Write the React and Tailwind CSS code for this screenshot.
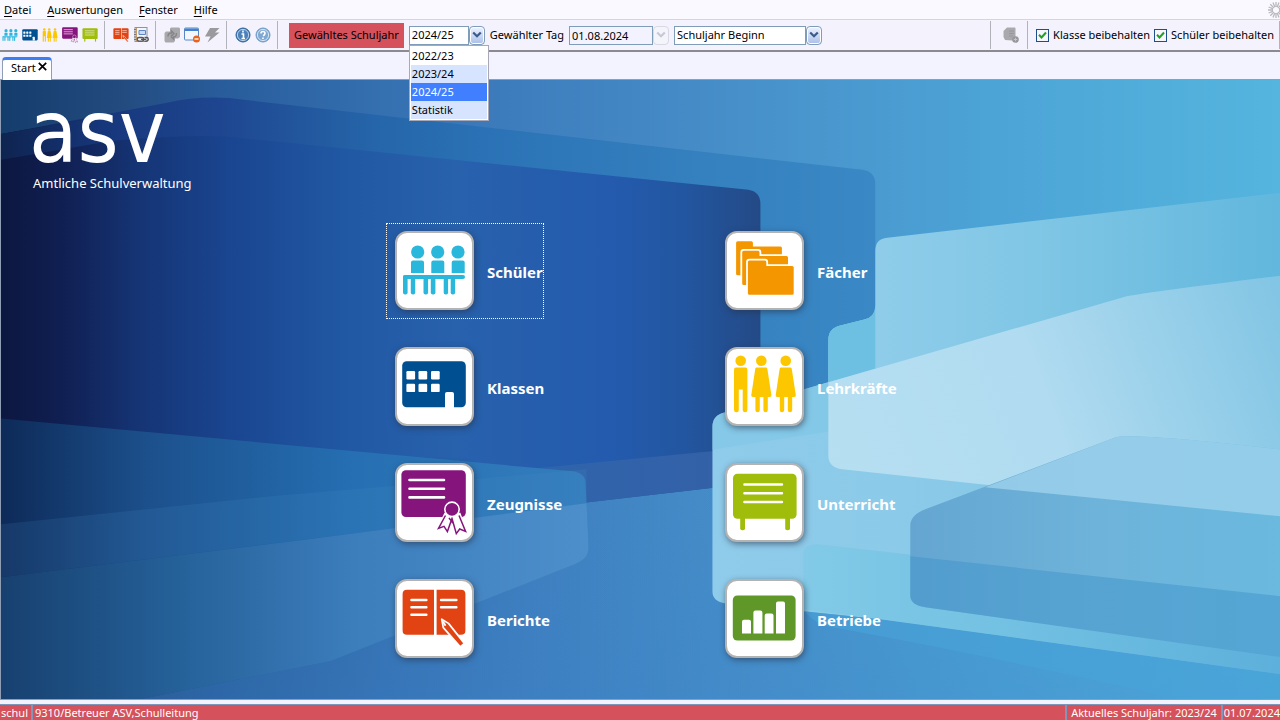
import React from "react";

const pictograms = {
  students: (
    <g fill="#2ab7dc">
      <circle cx="22.7" cy="21" r="6.6" />
      <circle cx="42.7" cy="21" r="6.6" />
      <circle cx="63" cy="21" r="6.6" />
      <path d="M16 42V31.5q0-2 2-2h9q2 0 2 2V42zM36.3 42V31.5q0-2 2-2h9q2 0 2 2V42zM56.7 42V31.5q0-2 2-2h9q2 0 2 2V42z" />
      <rect x="8" y="44" width="62" height="4" rx="2" />
      <rect x="8" y="44" width="4.6" height="19.5" rx="2" />
      <rect x="15.8" y="46" width="4.4" height="17.5" rx="2" />
      <rect x="28.5" y="46" width="4.6" height="17.5" rx="2" />
      <rect x="35.8" y="46" width="4.6" height="17.5" rx="2" />
      <rect x="48.7" y="46" width="4.4" height="17.5" rx="2" />
      <rect x="55.7" y="46" width="4.4" height="17.5" rx="2" />
    </g>
  ),
  classes: (
    <g>
      <rect x="7.2" y="14.3" width="63.6" height="46" rx="4.5" fill="#004f90" />
      <g fill="#fff">
        <rect x="11.4" y="24" width="8.7" height="8.4" rx="1.2" />
        <rect x="23.5" y="24" width="8.7" height="8.4" rx="1.2" />
        <rect x="36" y="24" width="8.7" height="8.4" rx="1.2" />
        <rect x="11.4" y="36.7" width="8.7" height="8.4" rx="1.2" />
        <rect x="23.5" y="36.7" width="8.7" height="8.4" rx="1.2" />
        <rect x="36" y="36.7" width="8.7" height="8.4" rx="1.2" />
        <path d="M50 61V47q0-2 2-2h5q2 0 2 2V61z" />
      </g>
    </g>
  ),
  certificates: (
    <g>
      <rect x="6.4" y="7.3" width="64.4" height="46.7" rx="4.5" fill="#86147d" />
      <path d="M14.5 17H49M14.5 25.7H49M14.5 34.4H49" stroke="#fff" strokeWidth="2.6" strokeLinecap="round" />
      <path
        d="M50.5 51.5 43.5 65.4 49 63.4 52.6 68.6 57.2 57 61.3 70.6 64.7 66 70.6 68.4 64.2 51.5z"
        fill="#fff"
        stroke="#fff"
        strokeWidth="3.4"
      />
      <path
        d="M50.5 52.5 43.5 65.4 49 63.4 52.4 68.6 57 55.5 61.3 70.6 64.7 66 70.6 68.4 64 52.5M54 55l4.4 5.6"
        fill="none"
        stroke="#86147d"
        strokeWidth="1.5"
      />
      <circle cx="57" cy="46.3" r="7.2" fill="#86147d" stroke="#fff" strokeWidth="1.6" />
    </g>
  ),
  reports: (
    <g>
      <path d="M39 10.7H12q-4.4 0-4.4 4.4V51.4q0 4.4 4.4 4.4H39zM41.6 10.7H66q4.4 0 4.4 4.4V51.4q0 4.4-4.4 4.4H41.6z" fill="#e24313" />
      <path d="M16.4 21H31.4M16.4 28.3H31.4M16.4 35.8H31.4M46 21H61.4M46 28.3H61.4" stroke="#fff" strokeWidth="2.4" strokeLinecap="round" />
      <path d="M46.7 40.2l1.6 8.4L65.2 67.8l4.2-3.4L53.5 44.4z" fill="#e24313" stroke="#fff" strokeWidth="1.7" strokeLinejoin="round" />
      <path d="M48 42.5l2.5 4.2" stroke="#fff" strokeWidth="1.8" />
    </g>
  ),
  subjects: (
    <g fill="#f49600" stroke="#fff" strokeWidth="1.8">
      <path d="M10.2 11.8q0-2.4 2.4-2.4H26.4q2.4 0 2.4 2.4v2.8H55.4q2.4 0 2.4 2.4V42.8q0 2.4-2.4 2.4H12.6q-2.4 0-2.4-2.4z" />
      <path d="M16.3 21.2q0-2.4 2.4-2.4H33q2.4 0 2.4 2.4v3H61.5q2.4 0 2.4 2.4V52.6q0 2.4-2.4 2.4H18.7q-2.4 0-2.4-2.4z" />
      <path d="M22 31q0-2.4 2.4-2.4H39.8q2.4 0 2.4 2.4v3.2H67.2q2.4 0 2.4 2.4V62.2q0 2.4-2.4 2.4H24.4q-2.4 0-2.4-2.4z" />
    </g>
  ),
  teachers: (
    <g fill="#fdc700">
      <circle cx="15.7" cy="13.7" r="5.3" />
      <circle cx="36.3" cy="13.7" r="5.3" />
      <circle cx="60.7" cy="13.7" r="5.3" />
      <path d="M9 22.4q0-2 2-2h9.400q2 0 2 2V63q0 2.200-2.300 2.200T17.700 63V42.500H13.800V63q0 2.200-2.400 2.200T9 63z" />
      <path d="M31.800 20.400h9q1.200 0 1.500 1.200L46.400 48q.3 2-1.600 2h-2v13q0 2.200-2.200 2.200T38.400 63V50H34.800V63q0 2.200-2.200 2.200T30.400 63V50h-2.500q-1.900 0-1.600-2L30.300 21.600q.3-1.200 1.500-1.200z" />
      <path d="M56.200 20.400h9q1.200 0 1.500 1.200L70.800 48q.3 2-1.600 2h-2v13q0 2.200-2.200 2.200T62.800 63V50H59.200V63q0 2.200-2.200 2.200T54.800 63V50h-2.500q-1.900 0-1.600-2L54.700 21.600q.3-1.200 1.500-1.200z" />
    </g>
  ),
  lessons: (
    <g>
      <rect x="8" y="10.7" width="63.6" height="45" rx="4.5" fill="#9fbd0a" />
      <rect x="15.2" y="52" width="4.8" height="15.2" rx="2" fill="#9fbd0a" />
      <rect x="60.2" y="52" width="4.8" height="15.2" rx="2" fill="#9fbd0a" />
      <path d="M19.4 21.5H57M19.4 30.2H57M19.4 39H57" stroke="#fff" strokeWidth="2.4" strokeLinecap="round" />
    </g>
  ),
  companies: (
    <g>
      <rect x="7.8" y="16.4" width="62.8" height="45.2" rx="4.5" fill="#5f9829" />
      <path
        d="M17 54.4V42.8q0-2 2-2h5q2 0 2 2V54.4zM28.4 54.4V33.4q0-2 2-2h5q2 0 2 2V54.4zM39.7 54.4V36.4q0-2 2-2h4.8q2 0 2 2V54.4zM51 54.4V24.4q0-2 2-2h5q2 0 2 2V54.4z"
        fill="#fff"
      />
    </g>
  ),
};

const tiles = [
  { id: "students", label: "Schüler", focused: true },
  { id: "subjects", label: "Fächer" },
  { id: "classes", label: "Klassen" },
  { id: "teachers", label: "Lehrkräfte" },
  { id: "certificates", label: "Zeugnisse" },
  { id: "lessons", label: "Unterricht" },
  { id: "reports", label: "Berichte" },
  { id: "companies", label: "Betriebe" },
];

function ToolButton({ label, children, viewBox = "0 0 16 16", disabled }) {
  return (
    <button type="button" aria-label={label} title={label} disabled={disabled} className="size-4 shrink-0">
      <svg viewBox={viewBox} className="size-4" aria-hidden="true">
        {children}
      </svg>
    </button>
  );
}

function Divider() {
  return <div className="h-7 w-px shrink-0 bg-[#b2b2ba]" />;
}

function Chevron({ disabled }) {
  return (
    <span
      className={
        disabled
          ? "pointer-events-none flex h-[19px] w-4 items-center justify-center rounded-sm border border-[#d9d9e4] bg-[#f4f4fb] text-[#c9c9d6]"
          : "pointer-events-none flex h-[19px] w-4 items-center justify-center rounded-sm border border-[#7f9db9] bg-linear-to-b from-[#eef3ff] to-[#a9bfe8] text-[#3c5a8c] inset-ring inset-ring-white"
      }
    >
      <svg viewBox="0 0 10 8" className="h-2 w-2.5" fill="none" stroke="currentColor" strokeWidth="2.2" aria-hidden="true">
        <path d="M1.2 1.5 5 5.3 8.8 1.5" />
      </svg>
    </span>
  );
}

function Combo({ id, value, options, className, label }) {
  return (
    <div className={"flex h-[19px] " + className}>
      <select
        id={id}
        aria-label={label}
        defaultValue={value}
        className="h-[19px] min-w-0 flex-1 appearance-none border border-[#7f9db9] bg-white px-0.5 text-[11px] leading-4 text-black outline-none"
      >
        {options.map((o) => (
          <option key={o}>{o}</option>
        ))}
      </select>
      <Chevron />
    </div>
  );
}

function Check({ label }) {
  return (
    <label className="flex items-center gap-1">
      <span className="grid size-[13px] place-items-center">
        <input type="checkbox" defaultChecked className="col-start-1 row-start-1 size-[13px] appearance-none border border-[#1c4f8c] bg-[#f6f6fb]" />
        <svg viewBox="0 0 9 9" className="pointer-events-none col-start-1 row-start-1 size-[9px]" fill="none" stroke="#21a121" strokeWidth="2" aria-hidden="true">
          <path d="M1 3.8 3.5 6.5 8 1.5" />
        </svg>
      </span>
      {label}
    </label>
  );
}

function Backdrop() {
  return (
    <svg viewBox="0 80 1280 620" preserveAspectRatio="none" className="absolute inset-0 h-full w-full" aria-hidden="true">
      <defs>
        <linearGradient id="sky" gradientUnits="userSpaceOnUse" x1="0" y1="0" x2="1280" y2="0">
          <stop offset="0" stopColor="#143d6c" />
          <stop offset=".09" stopColor="#234a7e" />
          <stop offset=".17" stopColor="#285c9a" />
          <stop offset=".3" stopColor="#3570b1" />
          <stop offset=".42" stopColor="#3f7fbf" />
          <stop offset=".6" stopColor="#4892cb" />
          <stop offset=".78" stopColor="#4ca4d6" />
          <stop offset="1" stopColor="#55b5de" />
        </linearGradient>
        <linearGradient id="floor" gradientUnits="userSpaceOnUse" x1="0" y1="350" x2="0" y2="700">
          <stop offset="0" stopColor="#3a82c8" stopOpacity="0" />
          <stop offset="1" stopColor="#3a82c8" stopOpacity=".3" />
        </linearGradient>
        <linearGradient id="outer" gradientUnits="userSpaceOnUse" x1="0" y1="0" x2="875" y2="0">
          <stop offset="0" stopColor="#0e2450" />
          <stop offset=".12" stopColor="#17377c" />
          <stop offset=".25" stopColor="#1e4690" />
          <stop offset=".42" stopColor="#2564a8" />
          <stop offset=".55" stopColor="#2a72b5" />
          <stop offset=".8" stopColor="#3580bf" />
          <stop offset="1" stopColor="#3a88c5" />
        </linearGradient>
        <linearGradient id="inner" gradientUnits="userSpaceOnUse" x1="0" y1="0" x2="760" y2="0">
          <stop offset="0" stopColor="#0c1740" />
          <stop offset=".08" stopColor="#101f52" />
          <stop offset=".18" stopColor="#153474" />
          <stop offset=".3" stopColor="#1a4590" />
          <stop offset=".45" stopColor="#2158a3" />
          <stop offset=".6" stopColor="#2861ac" />
          <stop offset=".8" stopColor="#245bae" />
          <stop offset=".9" stopColor="#2256a0" />
          <stop offset="1" stopColor="#244a86" />
        </linearGradient>
        <linearGradient id="innerFoot" gradientUnits="userSpaceOnUse" x1="0" y1="0" x2="760" y2="0">
          <stop offset="0" stopColor="#103060" />
          <stop offset=".5" stopColor="#2a68ac" />
          <stop offset="1" stopColor="#3560a8" />
        </linearGradient>
        <linearGradient id="left" gradientUnits="userSpaceOnUse" x1="0" y1="0" x2="588" y2="0">
          <stop offset="0" stopColor="#0d2a58" />
          <stop offset=".25" stopColor="#1c508c" />
          <stop offset=".6" stopColor="#256fb2" />
          <stop offset="1" stopColor="#347dbd" />
        </linearGradient>
        <linearGradient id="leftLow" gradientUnits="userSpaceOnUse" x1="0" y1="0" x2="588" y2="0">
          <stop offset="0" stopColor="#17406f" />
          <stop offset=".3" stopColor="#256199" />
          <stop offset=".6" stopColor="#3c7dbc" />
          <stop offset="1" stopColor="#4d8fcb" />
        </linearGradient>
        <linearGradient id="right" gradientUnits="userSpaceOnUse" x1="875" y1="0" x2="1280" y2="0">
          <stop offset="0" stopColor="#8fcdea" />
          <stop offset=".4" stopColor="#80c6e5" />
          <stop offset="1" stopColor="#61b7dd" />
        </linearGradient>
        <linearGradient id="pale" gradientUnits="userSpaceOnUse" x1="800" y1="470" x2="1280" y2="290">
          <stop offset="0" stopColor="#b7dff2" />
          <stop offset=".5" stopColor="#b0dbf0" />
          <stop offset="1" stopColor="#82c5e4" />
        </linearGradient>
        <linearGradient id="low" gradientUnits="userSpaceOnUse" x1="712" y1="0" x2="1280" y2="0">
          <stop offset="0" stopColor="#8fcbea" />
          <stop offset=".4" stopColor="#8acae8" />
          <stop offset="1" stopColor="#70bce0" />
        </linearGradient>
        <linearGradient id="teal" gradientUnits="userSpaceOnUse" x1="800" y1="0" x2="1280" y2="0">
          <stop offset="0" stopColor="#82cae7" />
          <stop offset=".5" stopColor="#70bfe2" />
          <stop offset="1" stopColor="#5db0db" />
        </linearGradient>
        <linearGradient id="slab" gradientUnits="userSpaceOnUse" x1="910" y1="0" x2="1280" y2="0">
          <stop offset="0" stopColor="#64a6d1" />
          <stop offset=".5" stopColor="#6eb3da" />
          <stop offset="1" stopColor="#6ab9df" />
        </linearGradient>
      </defs>
      <rect y="80" width="1280" height="620" fill="url(#sky)" />
      <rect y="80" width="1280" height="620" fill="url(#floor)" />
      <path d="M0 134 165 103Q205 94 245 100L862 170Q875 172 875 184V413Q875 424 862 428L588 467 0 530z" fill="url(#outer)" />
      <path d="M0 134 110 115V141Q190 134 230 137L748 190Q760 192 760 204V483L588 503 0 580z" fill="url(#inner)" />
      <path d="M0 134 110 115V141L0 160z" fill="url(#outer)" />
      <path d="M0 525 400 482 760 447V483L588 503 0 578z" fill="url(#innerFoot)" />
      <path d="M0 419 572 472Q585 474 585 484L588 548Q588 560 574 565L330 662 140 700H0z" fill="url(#left)" />
      <path d="M0 525 270 497 586 470V505L0 578z" fill="#4b96cb" opacity=".14" />
      <path d="M0 578 300 541 586 504 588 548Q588 560 574 565L330 662 140 700H0z" fill="url(#leftLow)" />
      <path d="M828 340Q828 329 840 326L864 320Q875 317 875 306V251Q875 239 887 238L1280 193V450L828 470z" fill="url(#right)" />
      <path d="M828 340Q828 329 840 326L864 320Q875 317 875 306V430L828 430z" fill="#6ec0e3" />
      <path d="M712 427Q712 416 724 413L803 390 1125 297Q1135 294 1280 276V675L880 620 724 604Q712 602 712 592z" fill="url(#low)" />
      <path d="M803 390 828 383 875 369V425L712 450V427Q712 416 724 413z" fill="#7fc6e6" opacity=".6" />
      <path d="M803 390 1125 297Q1135 294 1280 276V517L842 470Q828 468 828 456V383z" fill="url(#pale)" />
      <path d="M803 555Q803 544 818 545L1280 597V675L880 620 803 610z" fill="url(#teal)" />
      <path d="M910 526Q910 516 925 510L1115 438Q1130 433 1280 450V658L925 608Q910 606 910 596z" fill="url(#slab)" />
      <path d="M985 488 1115 438Q1130 433 1280 450V517z" fill="#a2d4ed" opacity=".75" />
      <path d="M910 557 1280 597V658L925 608Q910 606 910 596z" fill="#3f93ca" opacity=".5" />
      <path d="M803 612 880 620 1280 675V700H1180Q980 655 820 626z" fill="#48a4d8" opacity=".6" />
    </svg>
  );
}

function Tile({ id, label, focused }) {
  return (
    <button
      type="button"
      className={
        "flex h-24 items-center gap-[13px] justify-self-start border border-dotted px-2 pb-px text-left " +
        (focused ? "w-[158px] overflow-hidden border-white" : "border-transparent")
      }
    >
      <span className="size-[79px] shrink-0 rounded-xl border-2 border-[#b3b3b3] bg-white shadow-[1px_2px_6px_rgba(40,50,70,0.6)]">
        <svg viewBox="2 2 75 75" className="size-full" aria-hidden="true">
          {pictograms[id]}
        </svg>
      </span>
      <span className="pt-0.5 text-[15px] font-bold leading-5 text-white">{label}</span>
    </button>
  );
}

export default function App() {
  const years = ["2022/23", "2023/24", "2024/25", "Statistik"];
  const rowStyle = ["bg-white", "bg-[#d6e4ff]", "bg-[#407fff] text-white", "bg-[#d6e4ff]"];
  return (
    <div className="flex min-h-screen flex-col bg-[#f3f3ff] font-['Noto_Sans',sans-serif] text-[11px] leading-4 text-black">
      <nav className="flex h-5 items-center justify-between border-b border-[#d5d5dd] bg-[#f9f9ff] pl-1">
        <div className="flex gap-4">
          {["Datei", "Auswertungen", "Fenster", "Hilfe"].map((m) => (
            <button key={m} type="button" className="leading-4">
              <span className="underline underline-offset-2">{m[0]}</span>
              {m.slice(1)}
            </button>
          ))}
        </div>
        <div className="h-4 w-3 overflow-hidden">
          <svg viewBox="0 0 16 16" className="size-4" stroke="#b9b9bd" strokeWidth="1.3" aria-hidden="true">
            <path d="M8 0v5M8 11v5M0 8h5M11 8h5M2.3 2.3l3.600 3.600M10.100 10.100l3.600 3.600M2.300 13.700l3.600-3.600M10.100 5.900l3.600-3.600M5 .6l1.900 4.600M9.100 10.800l1.900 4.600M.6 5l4.600 1.900M10.800 9.100l4.600 1.900M.6 11l4.600-1.900M10.800 6.900l4.600-1.900M5 15.400l1.900-4.600M9.100 5.200 11 .6" />
          </svg>
        </div>
      </nav>

      <header className="flex h-8 items-center border-b-2 border-[#8c8a90] bg-[#f3f2fd] pl-0.5">
        <div className="flex items-center gap-1">
          <ToolButton label="Schüler" viewBox="6 8 66 62">{pictograms.students}</ToolButton>
          <ToolButton label="Klassen" viewBox="6 5 66 66">{pictograms.classes}</ToolButton>
          <ToolButton label="Lehrkräfte" viewBox="6 6 67 62">{pictograms.teachers}</ToolButton>
          <ToolButton label="Zeugnisse" viewBox="6 6 66 66">{pictograms.certificates}</ToolButton>
          <ToolButton label="Unterricht" viewBox="6 6 67 66">{pictograms.lessons}</ToolButton>
        </div>
        <div className="ml-1.5 flex items-center gap-2">
          <Divider />
          <div className="flex items-center gap-1">
            <ToolButton label="Berichte" viewBox="6 7 66 64">{pictograms.reports}</ToolButton>
            <ToolButton label="Notizbuch">
              <rect x="2" y=".5" width="12" height="14" fill="#f4f6fb" stroke="#8a94a6" />
              <path d="M3.500 1v13" stroke="#c59a6a" />
              <path d="M1 2.500h2M1 5h2M1 7.500h2M1 10h2M1 12.500h2" stroke="#77767a" />
              <path d="M6 3.500h6.500v4H6z" fill="#c9daf2" stroke="#5d87c4" />
              <path d="M6 10.500h3a1.800 1.800 0 0 1 0 3.600H6a1.800 1.800 0 0 1 0-3.600zM11.500 10.500h2a1.800 1.800 0 0 1 0 3.600h-2M8 12.300h5" fill="none" stroke="#555" strokeWidth="1.300" />
            </ToolButton>
          </div>
        </div>
        <div className="ml-1.5 flex items-center gap-2">
          <Divider />
          <div className="flex items-center gap-1">
            <ToolButton label="Aktualisieren" disabled>
              <path d="M6 1.500 7 .5h8l1 1V10l-2 1.500h-3V14l-1.500 1.500H1.500L.5 14V6L2 4.500h4z" fill="#a9a9ad" />
              <path d="M4 9.500q0-3.500 3.500-3.500V4L10 6.500 7.500 9V7.500M12.500 6q0 4-3 4v2L7 9.800" fill="none" stroke="#85858a" strokeWidth="1.400" />
            </ToolButton>
            <ToolButton label="Fenster schließen">
              <rect x=".5" y="1" width="14" height="12" rx="1" fill="#f2f7ff" stroke="#5b86c4" />
              <path d="M1 1.500h13V4H1z" fill="#4580cf" />
              <circle cx="12.500" cy="12" r="3.500" fill="#ea6318" />
              <path d="M10.500 12h4" stroke="#fff" strokeWidth="1.400" />
            </ToolButton>
            <ToolButton label="Ausführen" disabled>
              <path d="M6 1h9.500l-4.500 4.500h4.500L3.500 15.500 6.500 9.500H1z" fill="#9a9a9e" />
            </ToolButton>
          </div>
        </div>
        <div className="ml-1.5 flex items-center gap-2">
          <Divider />
          <div className="flex items-center gap-1">
            <ToolButton label="Information">
              <circle cx="8" cy="8" r="7" fill="#4b80b8" stroke="#2f629c" />
              <circle cx="8" cy="8" r="5.600" fill="none" stroke="#b9d2ea" />
              <path d="M8 3.600v1.900M6.500 7H8.500v4M6.500 11.500h3.500" stroke="#fff" strokeWidth="1.600" fill="none" />
            </ToolButton>
            <ToolButton label="Hilfe">
              <circle cx="8" cy="8" r="7" fill="#7fa8d3" stroke="#6f9ac6" />
              <circle cx="8" cy="8" r="5.600" fill="none" stroke="#d5e4f3" />
              <path d="M6 6.500q0-2 2-2t2 1.700T8 8.800M8 10.500V12" stroke="#fff" strokeWidth="1.600" fill="none" />
            </ToolButton>
          </div>
        </div>
        <div className="ml-1.5 flex items-center gap-[11px]">
          <Divider />
          <label htmlFor="year" className="flex h-[25px] items-center bg-[#d5515b] px-[5px]">
            Gewähltes Schuljahr
          </label>
        </div>
        <div className="relative ml-[5px]">
          <Combo id="year" value="2024/25" options={years} className="w-[76px]" />
          <ul role="listbox" aria-label="Schuljahr" className="absolute top-full left-0 z-10 w-20 border border-[#a9a9b6] bg-white p-px">
            {years.map((y, i) => (
              <li key={y} role="option" aria-selected={i === 2} className={"h-[18px] px-px leading-[18px] " + rowStyle[i]}>
                {y}
              </li>
            ))}
          </ul>
        </div>
        <label htmlFor="day" className="ml-[5px]">
          Gewählter Tag
        </label>
        <div className="ml-[5px] flex">
          <input
            id="day"
            disabled
            defaultValue="01.08.2024"
            className="h-[19px] w-[84px] border border-[#7f9db9] bg-[#f3f3ff] px-0.5 text-[11px] leading-4"
          />
          <Chevron disabled />
        </div>
        <Combo id="anchor" label="Stichtag" value="Schuljahr Beginn" options={["Schuljahr Beginn"]} className="ml-[5px] w-[148px]" />

        <div className="ml-auto flex items-center">
          <Divider />
          <div className="mx-2 flex pl-1">
            <ToolButton label="Daten hinzufügen" disabled>
              <path d="M4 .5h8l.5 1V12l-3 1.500L2 13 .5 10V4z" fill="#a9a9ad" />
              <path d="M6 4h5M6 6.500h5M6 9h4" stroke="#98989c" />
              <circle cx="12.500" cy="12.500" r="3.300" fill="#98989c" />
              <path d="M12.500 10.800v3.400M10.800 12.500h3.400" stroke="#c5c5c8" />
            </ToolButton>
          </div>
          <Divider />
          <div className="flex gap-1 pr-[5px] pl-2">
            <Check label="Klasse beibehalten" />
            <Check label="Schüler beibehalten" />
          </div>
          <Divider />
        </div>
      </header>

      <div className="flex h-7 items-end border-b border-[#8f9db5] pl-0.5">
        <div className="-mb-px flex h-[23px] items-start gap-0.5 rounded-t-sm border border-t-3 border-b-0 border-[#8f9db5] border-t-[#3c7cf5] bg-white pr-1 pl-2">
          <button type="button" className="leading-4">
            Start
          </button>
          <button type="button" aria-label="Tab schließen" className="pt-0.5">
            <svg viewBox="0 0 9 9" className="size-[9px]" stroke="#000" strokeWidth="1.700" aria-hidden="true">
              <path d="M.8.8 8.200 8.200M8.200.8.800 8.200" />
            </svg>
          </button>
        </div>
      </div>

      <main className="relative flex-1 border-b border-l border-[#8f9db5] pb-8">
        <Backdrop />
        <div className="relative h-[143px] pt-2 pl-7 text-white">
          <h1>
            <span className="block h-[85px] font-['DejaVu_Sans_Condensed','DejaVu_Sans',sans-serif] text-[88px] leading-[88px]">asv</span>
            <span className="block pl-1 text-[13px] leading-5">Amtliche Schulverwaltung</span>
          </h1>
        </div>
        <div className="relative grid grid-cols-[330px_178px] justify-center gap-y-5 pr-px">
          {tiles.map((t) => (
            <Tile key={t.id} {...t} />
          ))}
        </div>
      </main>

      <footer className="mt-1 flex h-4 border-t border-[#8096b8] bg-[#d5515b] leading-[15px] text-white">
        <span className="border-r-2 border-[#8096b8] pr-[3px] pl-px">schul</span>
        <span className="flex-1 pl-0.5">9310/Betreuer ASV,Schulleitung</span>
        <span className="border-l-2 border-[#8096b8] px-1">Aktuelles Schuljahr: 2023/24</span>
        <span className="border-l-2 border-[#8096b8] pl-px">01.07.2024</span>
      </footer>
    </div>
  );
}
